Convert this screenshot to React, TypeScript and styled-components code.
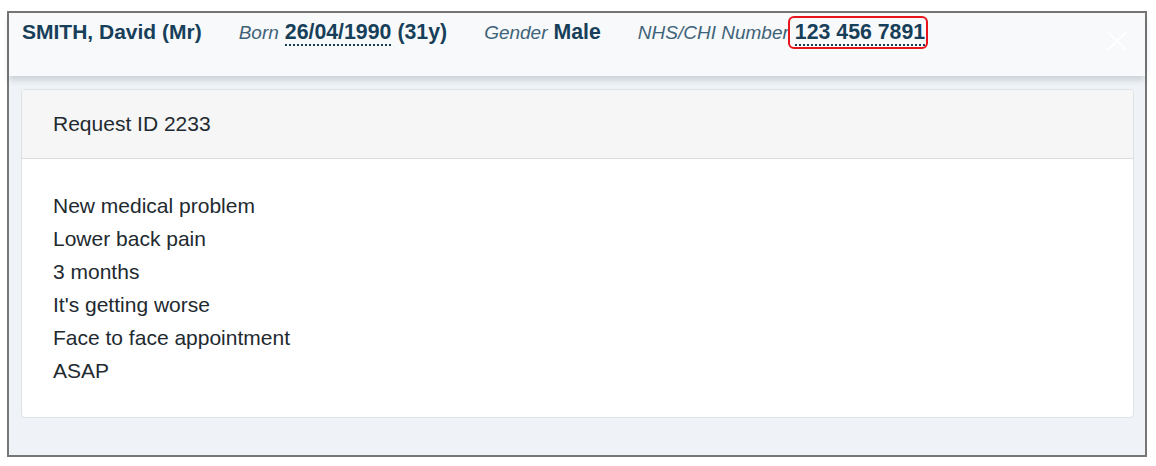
import React from "react";
import styled, { createGlobalStyle } from "styled-components";

const Global = createGlobalStyle`
  html, body { margin: 0; padding: 0; background: #ffffff; }
  body { font-family: "Liberation Sans", Arial, sans-serif; }
`;

const Frame = styled.div`
  margin: 11px 0 0 7px;
  width: 1140px;
  height: 446px;
  box-sizing: border-box;
  border: 2px solid #767676;
  background: #eff3f7;
  display: flex;
  flex-direction: column;
`;

const PatientBar = styled.header`
  position: relative;
  height: 63px;
  box-sizing: border-box;
  background: #f7f9fb;
  padding: 7px 0 0 13px;
  display: flex;
  align-items: flex-start;
  gap: 37px;
  box-shadow: 0 4px 6px rgba(40, 60, 80, 0.18);
  z-index: 1;
`;

const Field = styled.div`
  display: flex;
  align-items: baseline;
  gap: 6px;
  line-height: 24px;
  white-space: nowrap;
`;

const Name = styled.span`
  font-size: 21px;
  font-weight: 700;
  color: #173f59;
`;

const Label = styled.span`
  font-size: 19px;
  font-style: italic;
  color: #3f6379;
`;

const Value = styled.span<{ $dotted?: boolean }>`
  font-size: 21.3px;
  font-weight: 700;
  color: #173f59;
  ${(p) => (p.$dotted ? "border-bottom: 2px dotted #173f59;" : "")}
`;

const Highlight = styled.span`
  position: relative;
  &::after {
    content: "";
    position: absolute;
    left: -7px;
    right: -3px;
    top: -4px;
    bottom: -3px;
    border: 2px solid #e8141c;
    border-radius: 6px;
  }
`;

const Close = styled.button`
  position: absolute;
  right: 17px;
  top: 17px;
  width: 22px;
  height: 22px;
  padding: 0;
  border: 0;
  background: transparent;
  display: flex;
`;

const Content = styled.main`
  flex: 1;
  padding: 13px 11px 37px 12px;
  display: flex;
  flex-direction: column;
`;

const Card = styled.section`
  flex: 1;
  background: #ffffff;
  border: 1px solid #dfe2e5;
  border-radius: 4px;
  display: flex;
  flex-direction: column;
  overflow: hidden;
`;

const CardHeader = styled.div`
  height: 69px;
  box-sizing: border-box;
  background: #f6f6f6;
  border-bottom: 1px solid #dcdcdc;
  padding-left: 31px;
  display: flex;
  align-items: center;
  font-size: 21px;
  color: #222a30;
`;

const CardBody = styled.div`
  padding: 30px 31px;
  display: flex;
  flex-direction: column;
`;

const Line = styled.div`
  font-size: 21px;
  line-height: 33px;
  color: #222a30;
`;

const lines = [
  "New medical problem",
  "Lower back pain",
  "3 months",
  "It's getting worse",
  "Face to face appointment",
  "ASAP",
];

export default function App() {
  return (
    <>
      <Global />
      <Frame>
        <PatientBar>
          <Field>
            <Name>SMITH, David (Mr)</Name>
          </Field>
          <Field>
            <Label>Born</Label>
            <Value $dotted>26/04/1990</Value>
            <Value>(31y)</Value>
          </Field>
          <Field>
            <Label>Gender</Label>
            <Value>Male</Value>
          </Field>
          <Field>
            <Label>NHS/CHI Number</Label>
            <Highlight>
              <Value $dotted>123 456 7891</Value>
            </Highlight>
          </Field>
          <Close aria-label="Close">
            <svg width="22" height="22" viewBox="0 0 22 22">
              <path d="M2 2 L20 20 M20 2 L2 20" stroke="#ffffff" strokeWidth="2" />
            </svg>
          </Close>
        </PatientBar>
        <Content>
          <Card>
            <CardHeader>Request ID 2233</CardHeader>
            <CardBody>
              {lines.map((l) => (
                <Line key={l}>{l}</Line>
              ))}
            </CardBody>
          </Card>
        </Content>
      </Frame>
    </>
  );
}
